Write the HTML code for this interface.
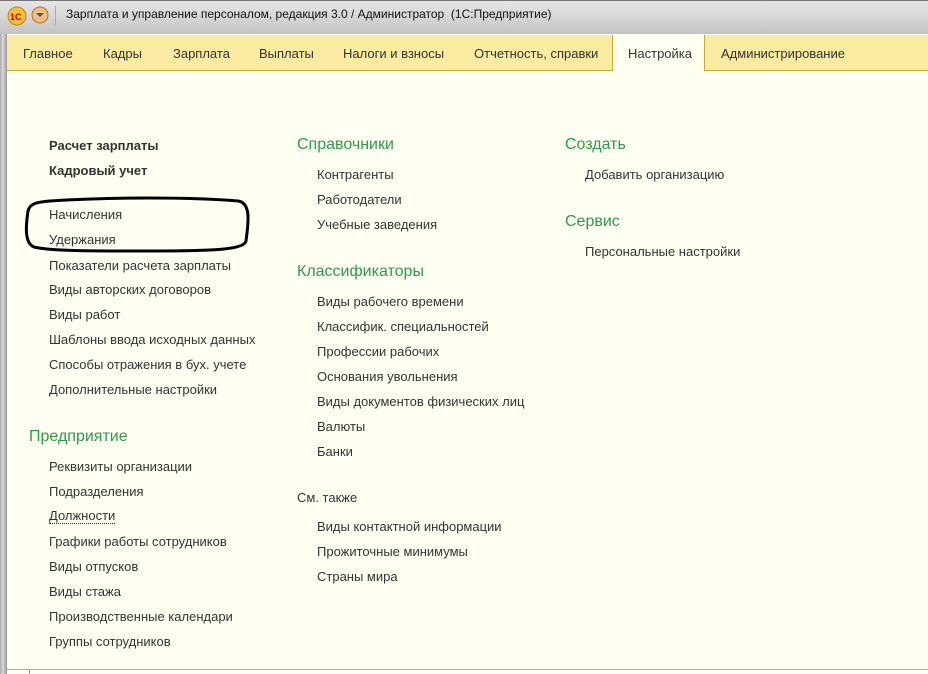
<!DOCTYPE html>
<html><head><meta charset="utf-8"><style>
*{margin:0;padding:0;box-sizing:border-box}
body{width:928px;height:674px;overflow:hidden;background:#fffff2;font-family:"Liberation Sans",sans-serif;font-size:13px;color:#333;position:relative}
.title{position:absolute;left:0;top:0;width:928px;height:34px;background:linear-gradient(#e6e6e6,#d4d4d4 55%,#c2c2c2);border-top:1px solid #777}
.title span{position:absolute;left:66px;top:6px;font-size:12px;color:#111}
.frame{position:absolute;left:0;top:34px;width:7px;height:640px;background:linear-gradient(90deg,#aaa,#d8d8d8 40%,#999)}
.tabs{position:absolute;left:7px;top:35px;width:921px;height:36px;background:#faeba0;border-bottom:1px solid #c8b030}
.tab{position:absolute;top:11px;color:#333;font-size:13px}
.act{position:absolute;left:605px;top:0;width:93px;height:36px;background:#fffff2;border-left:1px solid #c8a830;border-right:1px solid #c8a830}
a{position:absolute;color:#333;text-decoration:none;white-space:nowrap}
.b{font-weight:bold;color:#333}
.g{color:#2a9d4a;font-size:16px}
.bottom{position:absolute;left:7px;top:669px;width:921px;height:1px;background:#c8b030}
</style></head><body>
<div class="title">
<svg style="position:absolute;left:7px;top:5px" width="20" height="20"><circle cx="10" cy="10" r="9" fill="#f4c430" stroke="#c08020"/><text x="3" y="14" font-size="9" font-weight="bold" fill="#c00" font-family="Liberation Sans">1C</text></svg>
<svg style="position:absolute;left:31px;top:5px" width="18" height="18"><circle cx="9" cy="9" r="8" fill="#f0c080" stroke="#b07030"/><path d="M5 7l4 4 4-4z" fill="#555"/></svg>
<div style="position:absolute;left:55px;top:5px;width:1px;height:20px;background:#aaa"></div>
<span>Зарплата и управление персоналом, редакция 3.0 / Администратор &nbsp;(1С:Предприятие)</span>
</div>
<div class="frame"></div>
<div class="tabs">
<div class="act"></div>
<span class="tab" style="left:16px">Главное</span>
<span class="tab" style="left:96px">Кадры</span>
<span class="tab" style="left:166px">Зарплата</span>
<span class="tab" style="left:252px">Выплаты</span>
<span class="tab" style="left:336px">Налоги и взносы</span>
<span class="tab" style="left:467px">Отчетность, справки</span>
<span class="tab" style="left:621px">Настройка</span>
<span class="tab" style="left:714px">Администрирование</span>
</div>
<a class="b" style="left:49px;top:138px">Расчет зарплаты</a>
<a class="b" style="left:49px;top:163px">Кадровый учет</a>
<a style="left:49px;top:207px">Начисления</a>
<a style="left:49px;top:232px">Удержания</a>
<a style="left:49px;top:258px">Показатели расчета зарплаты</a>
<a style="left:49px;top:282px">Виды авторских договоров</a>
<a style="left:49px;top:307px">Виды работ</a>
<a style="left:49px;top:332px">Шаблоны ввода исходных данных</a>
<a style="left:49px;top:357px">Способы отражения в бух. учете</a>
<a style="left:49px;top:382px">Дополнительные настройки</a>
<a class="g" style="left:29px;top:428px">Предприятие</a>
<a style="left:49px;top:459px">Реквизиты организации</a>
<a style="left:49px;top:484px">Подразделения</a>
<a style="left:49px;top:509px;border-bottom:1px dotted #333;line-height:14px">Должности</a>
<a style="left:49px;top:534px">Графики работы сотрудников</a>
<a style="left:49px;top:559px">Виды отпусков</a>
<a style="left:49px;top:584px">Виды стажа</a>
<a style="left:49px;top:609px">Производственные календари</a>
<a style="left:49px;top:634px">Группы сотрудников</a>

<a class="g" style="left:297px;top:136px">Справочники</a>
<a style="left:317px;top:167px">Контрагенты</a>
<a style="left:317px;top:192px">Работодатели</a>
<a style="left:317px;top:217px">Учебные заведения</a>
<a class="g" style="left:297px;top:263px">Классификаторы</a>
<a style="left:317px;top:294px">Виды рабочего времени</a>
<a style="left:317px;top:319px">Классифик. специальностей</a>
<a style="left:317px;top:344px">Профессии рабочих</a>
<a style="left:317px;top:369px">Основания увольнения</a>
<a style="left:317px;top:394px">Виды документов физических лиц</a>
<a style="left:317px;top:419px">Валюты</a>
<a style="left:317px;top:444px">Банки</a>
<a style="left:297px;top:490px">См. также</a>
<a style="left:317px;top:519px">Виды контактной информации</a>
<a style="left:317px;top:544px">Прожиточные минимумы</a>
<a style="left:317px;top:569px">Страны мира</a>

<a class="g" style="left:565px;top:136px">Создать</a>
<a style="left:585px;top:167px">Добавить организацию</a>
<a class="g" style="left:565px;top:213px">Сервис</a>
<a style="left:585px;top:244px">Персональные настройки</a>

<svg style="position:absolute;left:20px;top:195px" width="235" height="62"><path d="M30 6 C90 2 170 2 218 6 C232 8 228 30 226 46 C224 56 180 56 120 56 C70 56 30 56 14 52 C4 48 6 30 8 16 C10 8 18 7 30 6Z" fill="none" stroke="#000" stroke-width="3"/></svg>
<div class="bottom"></div>
<div style="position:absolute;left:29px;top:670px;width:1px;height:4px;background:#999"></div>
</body></html>
